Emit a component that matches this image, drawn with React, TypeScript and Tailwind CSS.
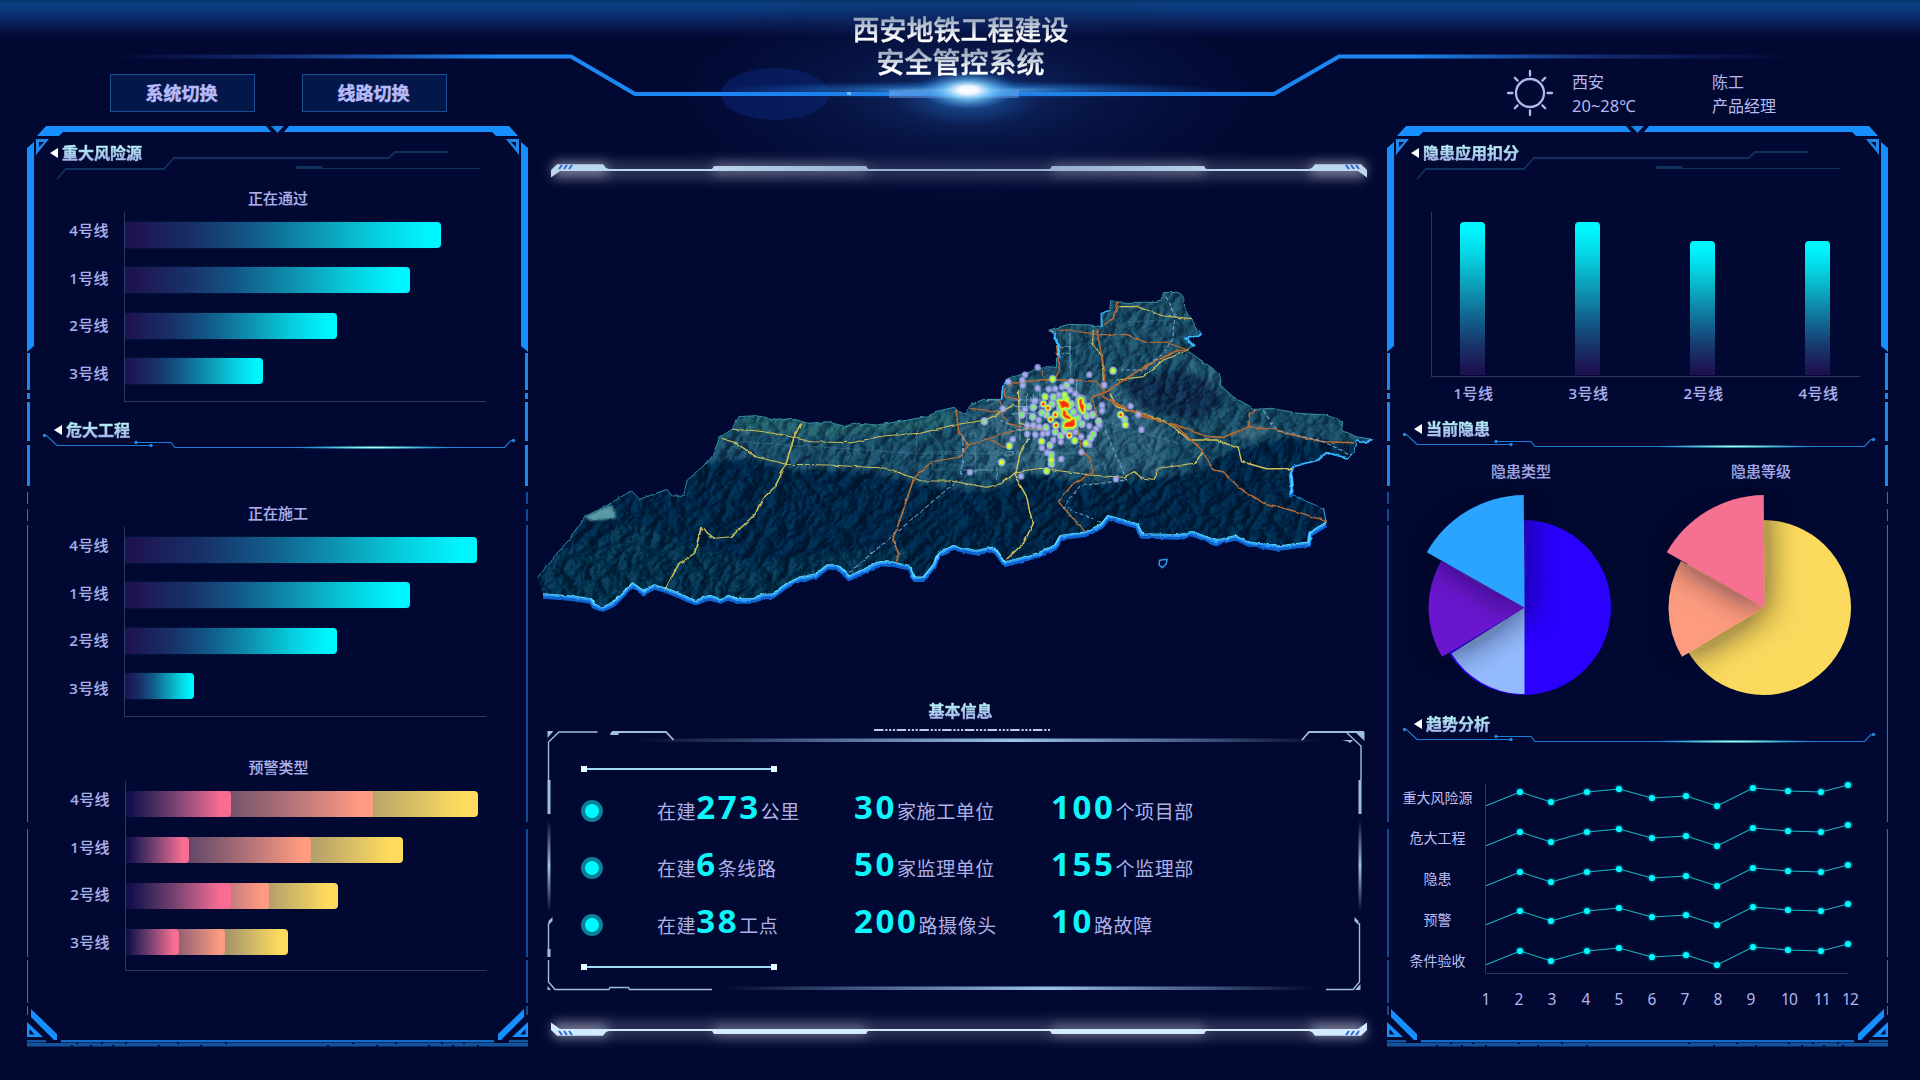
import React from "react";

const FONT = "font-['Noto_Sans','Noto_Sans_CJK_SC',sans-serif]";

/* ---------- decorative frames ---------- */

function FrameHalf() {
  return (
    <g>
      <polygon points="46,126 266,126 271,132 63,132 59,136 37,136" fill="#188fff" />
      <path d="M36 139H49L36 155ZM39 142V147L44 142Z" fill="#1f86e8" fillRule="evenodd" />
      <polygon points="34,142 34,346 27,352 27,148" fill="#188fff" />
      <polygon points="31,1009 57,1034 57,1041 55,1041 31,1017" fill="#188fff" />
      <path d="M27 1022L43 1037H27ZM29.500 1029V1034.500H34.500Z" fill="#188fff" fillRule="evenodd" />
    </g>
  );
}

function PanelFrame() {
  const specks = [71, 76, 90, 101, 112, 125, 158, 177, 200, 225, 327, 352, 376, 395, 428, 441, 452, 463, 477];
  return (
    <>
      <FrameHalf />
      <g transform="translate(555 0) scale(-1 1)">
        <FrameHalf />
      </g>
      <polygon points="271,126 284,126 277.500,133" fill="#1d84ea" />
      {/* left rail */}
      <path d="M28.500 353V390M28.500 393V399M28.500 402V441M28.500 445V486" stroke="#1d87ef" strokeWidth="3" fill="none" />
      <path d="M27.500 492V504M27.500 509V521M27.500 525V822M27.500 829V957M27.500 960V1003M27.500 1006V1015" stroke="#1a74d4" strokeWidth="1.200" fill="none" />
      {/* right rail */}
      <path d="M526.500 353V390M526.500 393V399M526.500 402V441M526.500 445V486" stroke="#1d87ef" strokeWidth="3" fill="none" />
      <path d="M527 492V504M527 509V521M527 525V822M527 829V957M527 960V1003M527 1006V1015" stroke="#0f4c93" strokeWidth="2" fill="none" />
      {/* base */}
      <path d="M61 1041H494" stroke="#188ffb" strokeWidth="1.500" />
      <path d="M27 1041H46M509 1041H528" stroke="#14569f" strokeWidth="2" />
      <rect x="27" y="1042.500" width="501" height="4" fill="#13539b" />
      {specks.map((x, i) => (
        <rect key={x} x={x} y={i % 2 ? 1042.500 : 1045} width="2" height="1.500" fill="#010831" />
      ))}
      <path d="M46 1041.500H61M494 1041.500H509" stroke="#010831" strokeWidth="3" />
    </>
  );
}

function Panel({ mirrored, children }: { mirrored?: boolean; children: React.ReactNode }) {
  return (
    <section className="relative flex h-[921px] w-[501px] shrink-0 flex-col">
      <svg
        viewBox="27 126 501 921"
        className={mirrored ? "absolute inset-0 h-[921px] w-[501px] -scale-x-100" : "absolute inset-0 h-[921px] w-[501px]"}
      >
        <PanelFrame />
      </svg>
      {children}
    </section>
  );
}

function Heading({ text }: { text: string }) {
  return (
    <h2 className="relative flex h-6 items-center gap-[3px] text-[16px] leading-6 font-bold">
      <svg width="9" height="10" viewBox="0 0 9 10">
        <polygon points="0,5 8,0 8,10" fill="#fff" />
      </svg>
      <span className="bg-linear-to-b from-[#b6f0f4] from-20% to-[#a3b3ee] to-85% bg-clip-text pr-1 text-transparent [-webkit-text-stroke:0.45px_transparent]">
        {text}
      </span>
    </h2>
  );
}

function PrimaryHeading({ text, className }: { text: string; className: string }) {
  return (
    <div className="relative h-[60px] pt-[15px]">
      <svg viewBox="27 126 501 60" className="absolute inset-0 h-[60px] w-[501px]">
        <g fill="none" stroke="#10305f">
          <path d="M57 179L66 169H164L174 158H388.500L395 152H448" strokeWidth="1.800" />
          <path d="M296 168.500H480" strokeWidth="1.100" />
          <path d="M296 167.500H322" strokeWidth="3" />
        </g>
      </svg>
      <div className={className}>
        <Heading text={text} />
      </div>
    </div>
  );
}

function CircuitHeading({ text, id }: { text: string; id: string }) {
  return (
    <div className="relative h-8">
      <svg viewBox="27 418 501 32" className="absolute inset-0 h-8 w-[501px]">
        <defs>
          <radialGradient id={id}>
            <stop offset="0" stopColor="#b8fff0" />
            <stop offset="0.350" stopColor="#5fe0d8" stopOpacity="0.900" />
            <stop offset="1" stopColor="#1f7fe0" stopOpacity="0" />
          </radialGradient>
        </defs>
        <path
          d="M44.500 435.500H46.500L57 445.500H151M136 442.500H171L175 447.500H504.500L511 440.500H513.500"
          fill="none"
          stroke="#217bd6"
          strokeWidth="1.200"
        />
        <g fill="#2d86de">
          <circle cx="44.500" cy="435.500" r="1.700" />
          <circle cx="151" cy="445.500" r="1.700" />
          <circle cx="136" cy="442.500" r="1.700" />
          <circle cx="513.500" cy="440.500" r="1.700" />
        </g>
        <ellipse cx="374" cy="447.500" rx="92" ry="2" fill={`url(#${id})`} />
      </svg>
      <div className="pl-[27px]">
        <Heading text={text} />
      </div>
    </div>
  );
}

/* ---------- bar charts ---------- */

const LINES = ["4号线", "1号线", "2号线", "3号线"];

function HBarChart({ title, children }: { title: string; children: React.ReactNode }) {
  return (
    <div className="relative h-[216px]">
      <h3 className="pl-px text-center text-[15px] leading-6 font-medium text-[#abb0ea] [-webkit-text-stroke:0.15px_#abb0ea]">{title}</h3>
      <div className="mt-[2px] flex h-[190px]">
        <ul className="flex w-[97px] flex-col gap-[27.500px] pt-[8px] pr-[15px] text-right text-[15px] leading-5 font-medium tracking-[0.400px] text-[#abb0ea] [-webkit-text-stroke:0.15px_#abb0ea]">
          {LINES.map((l) => (
            <li key={l}>{l}</li>
          ))}
        </ul>
        <div className="w-[362px] border-b border-l border-[#33355f] pt-[10px]">{children}</div>
      </div>
    </div>
  );
}

function CyanBars({ widths }: { widths: number[] }) {
  return (
    <div className="flex h-[162px] flex-col justify-between">
      {widths.map((w, i) => (
        <div
          key={i}
          style={{ width: w }}
          className="h-[26px] rounded-r-[4px] bg-[linear-gradient(90deg,#1e1351_2%,#183168_22%,#125a89_40%,#0d94b1_60%,#06cbdc_78%,#00f6ff_96%)] shadow-[0_0_3px_rgba(0,200,230,0.15)]"
        />
      ))}
    </div>
  );
}

const WARNINGS = [
  [105, 247, 352],
  [63, 185, 277],
  [105, 143, 212],
  [53, 99, 162],
];

function WarningBars() {
  return (
    <div className="flex h-[164px] flex-col justify-between">
      {WARNINGS.map(([a, b, c], i) => (
        <div key={i} className="grid h-[26px] items-stretch">
          <div style={{ width: c }} className="col-start-1 row-start-1 rounded-r-[4px] bg-linear-to-r from-[#1b1450] to-[#fedb5c] to-95%" />
          <div style={{ width: b }} className="col-start-1 row-start-1 rounded-r-[4px] bg-linear-to-r from-[#1b1450] to-[#ff9b80] to-95%" />
          <div style={{ width: a }} className="col-start-1 row-start-1 rounded-r-[4px] bg-linear-to-r from-[#150f4c] from-5% to-[#f76e92] to-90%" />
        </div>
      ))}
    </div>
  );
}

/* ---------- pies ---------- */

interface PieProps {
  title: string;
  id: string;
  base: string;
  lower?: string;
  side: string;
  top: string;
}

function Pie({ title, id, base, lower, side, top }: PieProps) {
  return (
    <figure className="w-[240px]">
      <figcaption className="text-center text-[15px] leading-5 font-medium text-[#a3a8e2] [-webkit-text-stroke:0.15px_#a3a8e2]">{title}</figcaption>
      <svg viewBox="1401 481 240 220" className="block h-[220px] w-[240px]">
        <defs>
          <filter id={`${id}-s`} x="-60%" y="-60%" width="220%" height="220%">
            <feDropShadow dx="3" dy="4" stdDeviation="16" floodColor="#0a0820" floodOpacity="0.600" />
          </filter>
        </defs>
        <circle cx="1523.500" cy="607.500" r="87.500" fill={base} />
        {lower && <path d="M1524.500 607.500V694H1520A86 86 0 0 1 1451.400 653.500Z" fill={lower} />}
        <path d="M1524.500 607.500L1442 656.700A95 95 0 0 1 1441 561Z" fill={side} filter={`url(#${id}-s)`} />
        <path d="M1524.500 607.500L1426.800 552.300A113 113 0 0 1 1523.700 495Z" fill={top} filter={`url(#${id}-s)`} />
      </svg>
    </figure>
  );
}

/* ---------- trend ---------- */

const TREND = [
  [1486, 805.7], [1520, 792], [1551, 802], [1587, 792], [1619, 789], [1652, 798],
  [1686, 796], [1717, 806], [1753, 788], [1788, 791], [1821, 792], [1848, 785],
];
const MONTH_X = [1486, 1519, 1552, 1586, 1619, 1652, 1685, 1718, 1751, 1789, 1822, 1850];
const TREND_ROWS = [0, 40, 80, 119, 159];
const TREND_LABELS = ["重大风险源", "危大工程", "隐患", "预警", "条件验收"];

function TrendChart() {
  return (
    <div className="mt-[32px] flex">
      <ul className="ml-[14px] flex w-[73px] flex-col gap-[20.800px] pt-[11.500px] text-center text-[14px] leading-5 whitespace-nowrap text-[#bcbff5]">
        {TREND_LABELS.map((l) => (
          <li key={l}>{l}</li>
        ))}
      </ul>
      <svg viewBox="1480 776 385 240" className="ml-[6px] h-[240px] w-[385px]">
        <path d="M1485.500 784V973.500H1848" fill="none" stroke="#33355f" />
        {TREND_ROWS.map((dy) => (
          <g key={dy} transform={`translate(0 ${dy})`}>
            <polyline points={TREND.map((p) => p.join(",")).join(" ")} fill="none" stroke="#1eb5bd" strokeWidth="1.100" />
            {TREND.slice(1).map(([x, y]) => (
              <g key={x}>
                <circle cx={x} cy={y} r="4.800" fill="#00b8c8" opacity="0.250" />
                <circle cx={x} cy={y} r="3.100" fill="#00f8ff" />
              </g>
            ))}
          </g>
        ))}
        <g fill="#b4b7ee" fontSize="15.500" textAnchor="middle">
          {MONTH_X.map((x, i) => (
            <text key={x} x={x} y="1004.500" letterSpacing={i > 8 ? -0.8 : 0}>
              {i + 1}
            </text>
          ))}
        </g>
      </svg>
    </div>
  );
}

/* ---------- header ---------- */

function HeaderBackdrop() {
  return (
    <svg viewBox="0 0 1920 240" className="absolute top-0 left-0 h-[240px] w-[1920px]">
      <defs>
        <linearGradient id="sky" x1="0" y1="0" x2="0" y2="1">
          <stop offset="0" stopColor="#083468" />
          <stop offset="0.080" stopColor="#0a3f80" />
          <stop offset="0.280" stopColor="#0a387a" />
          <stop offset="0.550" stopColor="#0a225e" />
          <stop offset="0.850" stopColor="#060f40" />
          <stop offset="1" stopColor="#010831" stopOpacity="0" />
        </linearGradient>
        <linearGradient id="rail" gradientUnits="userSpaceOnUse" x1="110" y1="0" x2="1800" y2="0">
          <stop offset="0" stopColor="#1c2f8a" stopOpacity="0" />
          <stop offset="0.090" stopColor="#1d3a8c" stopOpacity="0.700" />
          <stop offset="0.230" stopColor="#1c86f2" />
          <stop offset="0.770" stopColor="#1c86f2" />
          <stop offset="0.880" stopColor="#1d3a8c" stopOpacity="0.700" />
          <stop offset="1" stopColor="#1c2f8a" stopOpacity="0" />
        </linearGradient>
        <radialGradient id="haze">
          <stop offset="0" stopColor="#1b3f84" stopOpacity="0.700" />
          <stop offset="0.400" stopColor="#122a66" stopOpacity="0.380" />
          <stop offset="1" stopColor="#0a1a4c" stopOpacity="0" />
        </radialGradient>
        <radialGradient id="streak">
          <stop offset="0" stopColor="#7fd0ff" stopOpacity="0.950" />
          <stop offset="0.400" stopColor="#2a86e0" stopOpacity="0.550" />
          <stop offset="1" stopColor="#1560c0" stopOpacity="0" />
        </radialGradient>
        <radialGradient id="core">
          <stop offset="0" stopColor="#ffffff" />
          <stop offset="0.200" stopColor="#f4f8ff" />
          <stop offset="0.500" stopColor="#7ccfff" stopOpacity="0.650" />
          <stop offset="1" stopColor="#2a80e0" stopOpacity="0" />
        </radialGradient>
      </defs>
      <rect width="1920" height="38" fill="url(#sky)" />
      <ellipse cx="968" cy="95" rx="330" ry="120" fill="url(#haze)" />
      <ellipse cx="775" cy="94" rx="54" ry="26" fill="#0d2a86" opacity="0.420" />
      <path d="M110 56.500H571L635 94H1274L1339 56.500H1800" fill="none" stroke="url(#rail)" strokeWidth="4" />
      <ellipse cx="968" cy="90" rx="260" ry="9" fill="url(#streak)" />
      <rect x="889" y="90" width="130" height="8" fill="#8fb8f4" opacity="0.400" />
      <ellipse cx="968" cy="98" rx="75" ry="30" fill="url(#streak)" opacity="0.500" />
      <ellipse cx="968" cy="90" rx="50" ry="19" fill="url(#core)" />
      <rect x="847" y="92" width="4" height="3" fill="#6fb8f8" />
    </svg>
  );
}

function SunIcon() {
  return (
    <svg viewBox="-24 -24 48 48" width="48" height="48" fill="none" stroke="#b4b7ee" strokeWidth="2.300" strokeLinecap="round">
      <circle r="14" />
      {[0, 45, 90, 135, 180, 225, 270, 315].map((a) => (
        <path key={a} d={a % 90 ? "M0 -17.500V-21.500" : "M0 -17.500V-22"} transform={`rotate(${a})`} />
      ))}
    </svg>
  );
}

function Header() {
  const title =
    "bg-linear-to-b from-[#98a6ba] from-15% to-white to-75% bg-clip-text px-1 text-transparent [-webkit-text-stroke:0.5px_transparent]";
  return (
    <header className="relative h-[126px]">
      <HeaderBackdrop />
      <div className="relative grid h-[126px] grid-cols-3">
        <nav className="flex gap-[43px] pt-[74px] pl-[110px]">
          {["系统切换", "线路切换"].map((t) => (
            <button
              key={t}
              className="mr-1 h-[38px] w-[145px] border border-[#17508f] bg-[#03174a] pr-[2px] text-[18px] leading-none font-bold text-[#b8bafa] [-webkit-text-stroke:0.5px_#b8bafa]"
            >
              {t}
            </button>
          ))}
        </nav>
        <h1 className="flex flex-col items-center pt-[14px] pl-px font-medium">
          <span className={`${title} text-[27px] leading-8`}>西安地铁工程建设</span>
          <span className={`${title} text-[28px] leading-8`}>安全管控系统</span>
        </h1>
        <div className="flex pt-[69px] pl-[226px] text-[16px] leading-6 text-[#b6b9f0]">
          <SunIcon />
          <div className="ml-[18px] w-[140px] pt-px leading-[24px]">
            <p>西安</p>
            <p className="text-[16.500px]">20~28℃</p>
          </div>
          <div className="pt-px leading-[24px]">
            <p>陈工</p>
            <p>产品经理</p>
          </div>
        </div>
      </div>
    </header>
  );
}

/* ---------- centre ---------- */

function RailHalf({ fill }: { fill: string }) {
  return (
    <g>
      <path d="M551 177.500V170L557 164.300H603L606 168L609 169H712L714 166H866L868 169H960V171H560Z" fill={fill} />
      <path d="M559 169L562 165M564 169L567 165M569 169L572 165" stroke="#2b62d8" strokeWidth="2" />
    </g>
  );
}

function GlowRail({ flipped, fill, id }: { flipped?: boolean; fill: string; id: string }) {
  return (
    <svg viewBox="528 138 859 64" className={flipped ? "-mt-0.5 block h-16 w-[859px] -scale-y-100" : "block h-16 w-[859px]"}>
      <defs>
        <filter id={id} x="-10%" y="-300%" width="120%" height="700%">
          <feGaussianBlur stdDeviation="6" />
        </filter>
      </defs>
      <g filter={`url(#${id})`} fill="#c4c6d8">
        <rect x="553" y="161" width="812" height="19" opacity="0.220" />
        <rect x="553" y="163" width="54" height="13" opacity="0.550" />
        <rect x="714" y="163" width="152" height="12" opacity="0.380" />
        <rect x="1052" y="163" width="152" height="12" opacity="0.380" />
        <rect x="1311" y="163" width="54" height="13" opacity="0.550" />
      </g>
      <RailHalf fill={fill} />
      <g transform="translate(1918 0) scale(-1 1)">
        <RailHalf fill={fill} />
      </g>
    </svg>
  );
}

const OUTLINE_NORTH =
  "M32 922L58 872L62 860L88 812L118 740L160 705L203 662L218 688L268 658L275 675L298 676L305 630L335 590L350 560L365 500L387 478L397 440L430 437L475 450L495 445L525 460L560 455L590 468L620 460L650 465L690 455L740 440L770 420L792 412L800 425L815 432L820 405L845 388L878 388L880 350L890 325L925 308L960 290L978 292L978 265L985 262L975 190L965 180L1000 163L1040 165L1062 170L1060 130L1075 120L1077 95L1110 97L1150 97L1170 90L1173 68L1200 67L1210 85L1212 110L1225 150L1242 190L1238 198L1215 205L1228 228L1215 240L1250 280L1275 310L1280 350L1300 380L1340 418L1370 415L1420 430L1470 435L1500 455L1498 480L1525 500L1553 508";
const OUTLINE_EAST =
  "L1545 520L1525 510L1520 545L1510 565L1470 548L1455 570L1410 590L1405 610L1408 650L1405 675L1465 715L1470 760";
const OUTLINE_SOUTH =
  "L1440 790L1438 820L1380 832L1330 820L1305 800L1270 815L1225 788L1200 798L1135 795L1125 765L1072 740L1060 765L1030 790L985 800L975 830L945 852L885 880L865 835L830 845L790 830L762 850L755 885L735 925L720 925L710 890L680 880L655 878L600 922L580 888L560 888L540 915L510 925L485 945L460 975L440 978L425 990L395 990L380 980L365 990L345 980L320 995L270 960L245 948L225 965L205 942L170 1000L150 1015L135 1005L130 990L95 982L42 975";

/* x, y, strength: 0 faint halo, 1 green core, 2 yellow core, 3 red core */
const HEAT = [
  [323, 262, 0], [285, 284, 0], [277, 300, 0], [278, 316, 0], [235, 305, 0], [323, 325, 0], [368, 297, 2], [410, 316, 1], [424, 304, 0],
  [478, 284, 0], [549, 272, 2], [523, 315, 0], [376, 326, 0], [396, 322, 0], [356, 328, 0], [345, 350, 2], [404, 345, 2], [436, 341, 0],
  [448, 352, 0], [316, 362, 0], [340, 372, 3], [354, 384, 3], [366, 372, 1], [310, 382, 1], [284, 388, 0], [276, 404, 1], [308, 411, 1],
  [336, 398, 1], [362, 418, 3], [385, 400, 1], [378, 436, 3], [424, 372, 1], [430, 396, 1], [476, 380, 1], [376, 404, 3],
  [488, 404, 1], [516, 376, 0], [516, 392, 0], [470, 408, 1], [456, 432, 1], [478, 438, 0], [506, 424, 1], [508, 434, 0], [498, 446, 0],
  [292, 436, 0], [310, 436, 0], [292, 462, 0], [316, 464, 0], [338, 462, 0], [348, 442, 1], [328, 440, 0], [335, 484, 2], [360, 496, 1],
  [370, 480, 0], [392, 468, 1], [392, 486, 0], [418, 466, 3], [434, 482, 2], [454, 470, 0], [468, 490, 2], [490, 462, 1], [482, 474, 1],
  [336, 504, 0], [352, 518, 0], [364, 524, 1], [364, 540, 2], [364, 552, 1], [394, 537, 0], [350, 573, 2], [238, 498, 2], [248, 478, 0],
  [215, 547, 2], [120, 577, 0], [273, 589, 0], [454, 517, 0], [558, 597, 0], [572, 404, 3], [584, 418, 1], [586, 434, 2], [602, 379, 0],
  [625, 404, 0], [634, 449, 0], [219, 386, 0], [163, 424, 1], [478, 494, 0], [410, 358, 2], [386, 344, 0], [370, 352, 1], [420, 330, 0],
  [444, 414, 1], [326, 420, 0], [350, 404, 1], [390, 384, 1], [352, 460, 0], [376, 456, 1], [404, 452, 1], [436, 456, 0],
];

const HOT_SPOTS =
  "M388 364L396 366L400 362L408 366L416 372V382L404 380L396 384ZM400 392L406 394L408 406L416 408L422 416L408 414L399 406ZM406 430L418 426L432 418L434 434L428 440H404ZM449 360L454 358L455 370L461 378L459 396L453 386L450 376Z";

function HeatMap() {
  const green = HEAT.filter((h) => h[2] > 0);
  const yellow = HEAT.filter((h) => h[2] > 1);
  const red = HEAT.filter((h) => h[2] > 2);
  return (
    <g strokeLinejoin="round">
      <g fill="#9ea2e4" opacity="0.700">
        {HEAT.map(([x, y, s], i) => (
          <ellipse key={i} cx={x} cy={y} rx={s > 0 ? 12 : 10} ry={s > 0 ? 13 : 10.500} />
        ))}
        <path d={HOT_SPOTS} stroke="#9ea2e4" strokeWidth="30" />
      </g>
      <g fill="#b8b4fb" opacity="0.800">
        {HEAT.map(([x, y, s], i) => (
          <ellipse key={i} cx={x} cy={y} rx={s > 0 ? 9.500 : 6} ry={s > 0 ? 10.500 : 6.500} />
        ))}
      </g>
      <g fill="#7df06e">
        <path d={HOT_SPOTS} stroke="#7df06e" strokeWidth="18" />
        {green.map(([x, y, s], i) => (
          <ellipse key={i} cx={x} cy={y} rx={s > 1 ? 8.500 : 6} ry={s > 1 ? 9.500 : 7} />
        ))}
      </g>
      <g fill="#eef52a">
        <path d={HOT_SPOTS} stroke="#f2f022" strokeWidth="9" />
        {yellow.map(([x, y, s], i) => (
          <ellipse key={i} cx={x} cy={y} rx={s > 2 ? 7 : 5} ry={s > 2 ? 8 : 6} />
        ))}
      </g>
      <g fill="#fb3010">
        <path d={HOT_SPOTS} stroke="#fb5a10" strokeWidth="2.500" />
        {red.map(([x, y], i) => (
          <ellipse key={i} cx={x} cy={y} rx="4" ry="4.500" />
        ))}
      </g>
    </g>
  );
}

function CityMap() {
  const whole = OUTLINE_NORTH + OUTLINE_EAST + OUTLINE_SOUTH + "Z";
  const south = "M1405 610L1408 650L1405 675" + "M1470 760" + OUTLINE_SOUTH;
  return (
    <svg viewBox="528 202 859 497" className="block h-[497px] w-[859px]">
      <defs>
        <clipPath id="land">
          <path d={whole} transform="translate(520 270) scale(.5485 .33333)" />
        </clipPath>
        <linearGradient id="ground" x1="0" y1="0" x2="0" y2="1">
          <stop offset="0" stopColor="#1b4f69" />
          <stop offset="0.550" stopColor="#174c68" />
          <stop offset="1" stopColor="#0b3058" />
        </linearGradient>
        <filter id="rough" x="-5%" y="-5%" width="110%" height="110%">
          <feTurbulence type="fractalNoise" baseFrequency="0.120" numOctaves="3" seed="4" result="n" />
          <feDisplacementMap in="SourceGraphic" in2="n" scale="3" xChannelSelector="R" yChannelSelector="G" />
        </filter>
        <filter id="ridge" x="0" y="0" width="100%" height="100%" colorInterpolationFilters="sRGB">
          <feTurbulence type="turbulence" baseFrequency="0.045 0.065" numOctaves="4" seed="23" result="n" />
          <feDiffuseLighting in="n" surfaceScale="6" lightingColor="#ffffff" diffuseConstant="0.750">
            <feDistantLight azimuth="230" elevation="40" />
          </feDiffuseLighting>
        </filter>
        <filter id="soft" x="-20%" y="-20%" width="140%" height="140%">
          <feGaussianBlur stdDeviation="7" />
        </filter>
        <filter id="mist" x="-20%" y="-20%" width="140%" height="140%">
          <feGaussianBlur stdDeviation="3" />
        </filter>
      </defs>
      <g filter="url(#rough)">
        <g clipPath="url(#land)" className="isolate">
          <rect x="530" y="285" width="850" height="330" fill="url(#ground)" />
          <g transform="translate(520 270) scale(.5485 .33333)">
            <path fill="#256a6e" opacity="0.600" filter="url(#soft)" d="M400 440L800 430L780 470L560 500L400 490Z" />
            <path
              filter="url(#soft)"
              fill="#06254a"
              d="M20 1040V700L330 580L420 565L490 600L640 605L720 640L840 670L930 615L1050 645L1130 630L1220 615L1300 540L1400 500L1560 530V1040Z"
            />
            <path filter="url(#soft)" fill="#0e4058" opacity="0.450" d="M20 1040L60 860L200 760L420 880L700 830L760 1040Z" />
            <path filter="url(#soft)" fill="#0a2c4e" opacity="0.850" d="M1100 330L1200 300L1270 330L1290 400L1230 450L1130 420Z" />
            <path filter="url(#soft)" fill="#3f7690" opacity="0.450" d="M900 330L1080 330L1180 480L1180 600L820 610L800 480Z" />
            <path filter="url(#soft)" fill="#2f6a86" opacity="0.500" d="M1200 250L1270 300L1300 400L1220 300Z" />
          </g>
          <rect
            x="330"
            y="0"
            width="1300"
            height="1000"
            filter="url(#ridge)"
            transform="rotate(-40 955 450)"
            className="opacity-60 mix-blend-soft-light"
          />
          <g transform="translate(520 270) scale(.5485 .33333)">
            <path filter="url(#mist)" fill="#7fd0d0" opacity="0.700" d="M118 740L165 705L172 725L175 745L130 752Z" />
            <path filter="url(#mist)" fill="#5f8a98" opacity="0.450" d="M1290 490L1340 460L1370 480L1330 510Z" />
            <g fill="none" stroke="#6fb4cc" strokeWidth="1.500" opacity="0.400">
              <path d="M425 450L400 540M400 515L720 550M530 520L495 585M550 520L545 585M575 520L572 585M600 520L598 590M650 470L635 600M725 480L718 600M740 480L770 530L770 570M750 545H805V600H752ZM830 490V620M870 480V620M730 550H1050M780 585H900M985 190V420M1100 160L1130 210M1110 155L1180 150M1020 200L1010 320M1060 450L1200 520" />
            </g>
          </g>
        </g>
        <g transform="translate(520 270) scale(.5485 .33333)" fill="none" strokeLinejoin="round">
          <path d={OUTLINE_NORTH} stroke="#3fa9bd" strokeWidth="1.800" />
          <path d={"M1553 508" + OUTLINE_EAST} stroke="#2fa5e0" strokeWidth="2" />
          <path d={south} stroke="#0f63d0" strokeWidth="8" transform="translate(0 7)" />
          <path d={south} stroke="#2e9bff" strokeWidth="6" />
          <path d={south} stroke="#5fe6ff" strokeWidth="2.500" transform="translate(0 -4)" />
          <path
            d="M965 180L975 190L985 262M1242 190L1238 198L1215 205L1228 228M1553 508L1545 520L1525 510M1510 565L1470 548L1455 570L1410 590L1405 610"
            stroke="#35b4ff"
            strokeWidth="5"
          />
          <path d="M878 388L880 350L890 325M1060 170V130L1075 120" stroke="#35b4ff" strokeWidth="3" />
          {/* western roads */}
          <g stroke="#c9bd5c" strokeWidth="3.200">
            <path d="M387 478L430 482L480 495L530 515L605 518L660 498L730 490L790 465L850 450L900 405" />
            <path d="M368 505L395 520L430 560L485 583L560 585L670 595L730 632L790 634L850 652L880 640L905 605L950 595L1040 615L1100 622L1120 605L1135 625L1155 628L1165 595L1230 580L1245 545" />
            <path d="M512 460L500 500L485 583L465 650L440 690L430 730L405 770L385 800L355 805L330 775L318 850L290 880L265 958" />
          </g>
          <g stroke="#b86f3c" strokeWidth="3.200">
            <path d="M795 420L800 490L818 525L800 562L750 575L718 625L705 690L680 810L690 850L686 882" />
            <path d="M818 525L905 480L960 475" />
          </g>
          <path d="M795 635L695 775L595 915" stroke="#7fb0e0" strokeWidth="2.400" strokeDasharray="12 5" opacity="0.850" />
          <path d="M808 500L805 620" stroke="#7fb0e0" strokeWidth="2.400" strokeDasharray="12 5" opacity="0.850" />
        </g>
        <g transform="translate(930 280) scale(.33333)" fill="none" strokeLinejoin="round">
          <g stroke="#d0c05c" strokeWidth="4.500">
            <path d="M296 475L270 520L256 590L290 650L300 700L310 730L280 790L230 838" />
            <path d="M565 80L620 80L700 108L784 116" strokeWidth="3.500" />
            <path d="M490 150L488 190L516 230L520 300" strokeWidth="3.500" />
            <path d="M540 340L560 380L700 420L780 480L860 480L925 505L935 545L1010 566L1085 566" />
            <path d="M775 212L700 240L640 290L560 300" strokeWidth="3.500" />
            <path d="M265 330L268 430L340 445" strokeWidth="3.500" />
          </g>
          <g stroke="#b56a34" strokeWidth="4.500">
            <path d="M565 66L550 115L520 135" />
            <path d="M356 152L420 150L500 164L590 164L650 188L710 186L776 212" strokeWidth="3.500" />
            <path d="M500 150L510 200L525 280L520 350L560 375L740 440L815 510L850 570L880 575L930 625L1000 668L1110 698L1190 725" />
            <path d="M484 352L530 335L630 268L740 212L776 212" strokeWidth="5.500" />
            <path d="M980 390L958 400L956 440L880 472L830 470L740 435L640 410L540 360" strokeWidth="5" />
            <path d="M956 440L1030 448L1100 468L1180 485L1270 488" />
            <path d="M380 200L388 270L375 297L330 300L250 310L222 330L225 350L265 358" strokeWidth="4" />
            <path d="M332 270L345 300L440 300L500 305L520 330" strokeWidth="4" />
            <path d="M120 385L210 395L235 430L290 445L340 450M208 360L225 400M180 480L225 500" strokeWidth="4" />
            <path d="M440 440L455 510L485 540L485 580L430 610L385 665L465 755" />
            <path d="M484 352L500 400L505 430" strokeWidth="4" />
          </g>
          <g stroke="#8fb4d8" strokeWidth="3.500" strokeDasharray="12 7" opacity="0.800">
            <path d="M708 50L735 100L728 180L700 220L640 270L550 270" />
            <path d="M525 450L560 530L590 600L450 618L400 680L520 730" />
            <path d="M1000 392L1040 450L1180 485L1265 525" />
          </g>
          <g stroke="#9ad8f0" strokeWidth="3" opacity="0.550">
            <path d="M385 200h35v20h-35zM240 360h120M250 380h100M245 400h110M270 320v160M290 340v150M310 340v140M240 450h120M200 560v40M100 570h90M420 160v120M440 300v60M210 420l60 30M225 515h25v10h-25zM300 350l20 40M330 330v60M170 360h35" />
          </g>
        </g>
      </g>
      <g transform="translate(930 280) scale(.33333)">
        <HeatMap />
        <path d="M689 841L711 838L709 851L697 863L687 855Z" fill="none" stroke="#2f9bf0" strokeWidth="4.500" strokeLinejoin="round" />
      </g>
    </svg>
  );
}

function InfoFrame() {
  return (
    <svg viewBox="528 723 859 277" className="absolute inset-0 h-[277px] w-[859px]">
      <defs>
        <linearGradient id="beam">
          <stop offset="0" stopColor="#8fb4dc" stopOpacity="0" />
          <stop offset="0.300" stopColor="#8fb4dc" stopOpacity="0.600" />
          <stop offset="0.550" stopColor="#9cc4e6" />
          <stop offset="0.800" stopColor="#8fb4dc" stopOpacity="0.500" />
          <stop offset="1" stopColor="#8fb4dc" stopOpacity="0" />
        </linearGradient>
        <linearGradient id="post" x1="0" y1="0" x2="0" y2="1">
          <stop offset="0" stopColor="#a0c0e4" stopOpacity="0" />
          <stop offset="0.500" stopColor="#a0c0e4" />
          <stop offset="1" stopColor="#a0c0e4" stopOpacity="0" />
        </linearGradient>
      </defs>
      <path d="M874 730H1050" stroke="#b8cdea" strokeWidth="1.800" strokeDasharray="9.500 1.800 2.200 1.600 2.200 1.600 2.200 1.600" />
      <rect x="635" y="738.500" width="690" height="3.500" fill="url(#beam)" />
      <rect x="722" y="986.500" width="592" height="3.500" fill="url(#beam)" />
      <rect x="547.500" y="820" width="3" height="92" fill="url(#post)" />
      <rect x="1358.500" y="820" width="3" height="92" fill="url(#post)" />
      <g fill="none" stroke="#9fbde0" strokeWidth="1.400">
        <path d="M548.500 780V742L559 732H597.500" />
        <path d="M612 732H666L673.500 740" strokeWidth="1.800" />
        <path d="M548.500 923V957M548.500 960V982L555 989.500H609L610 987.500H628.500L629.500 989.500H712" />
        <path d="M1302 740L1309 732H1364" strokeWidth="1.800" />
        <path d="M1347 733L1361 746V780" />
        <path d="M1359.500 923V982L1353 989.500H1326" />
      </g>
      <g fill="#9fbde0">
        <path d="M547.500 731H553.500L547.500 738ZM611 732H620L618 735H610ZM1355 732H1364.500V741ZM1342 740H1353L1350 743L1348 741.500Z" />
        <rect x="547.500" y="780" width="3" height="34" />
        <rect x="1358.500" y="780" width="3" height="34" />
        <rect x="547.500" y="949" width="3" height="8" />
        <path d="M552.500 917V921L548.500 925V921ZM1354.500 917V921L1358.500 925V921ZM547.500 986V990H551ZM1360.500 984V990H1355Z" />
      </g>
    </svg>
  );
}

function CapLine() {
  return (
    <div className="flex h-1.5 w-[196px] items-center">
      <i className="h-1.5 w-1.5 bg-[#e6fbff]" />
      <i className="h-0.5 flex-1 bg-[#a0dcf2]" />
      <i className="h-1.5 w-1.5 bg-[#e6fbff]" />
    </div>
  );
}

const INFO: [string, string, string][][] = [
  [["在建", "273", "公里"], ["", "30", "家施工单位"], ["", "100", "个项目部"]],
  [["在建", "6", "条线路"], ["", "50", "家监理单位"], ["", "155", "个监理部"]],
  [["在建", "38", "工点"], ["", "200", "路摄像头"], ["", "10", "路故障"]],
];

function BasicInfo() {
  return (
    <div className="relative h-[277px] pt-[43px] pl-[53px]">
      <InfoFrame />
      <div className="relative">
        <CapLine />
        <div className="mt-[10px] mb-[11px] flex flex-col">
          {INFO.map((row, i) => (
            <div key={i} className="flex h-[57px] items-center">
              <i className="mr-[54px] h-[22px] w-[22px] rounded-full border-4 border-[#0c7f99] bg-[#00f8ff]" />
              {row.map(([pre, num, post], j) => (
                <p
                  key={j}
                  className="flex h-[57px] w-[197px] items-baseline text-[19px] leading-[49px] tracking-[0.600px] whitespace-nowrap text-[#aeb0e6]"
                >
                  {pre}
                  <b className="text-[33px] leading-[49px] font-bold tracking-[2.600px] text-[#0ff4fb]">{num}</b>
                  {post}
                </p>
              ))}
            </div>
          ))}
        </div>
        <CapLine />
      </div>
    </div>
  );
}

/* ---------- page ---------- */

const SCORES = [
  { name: "1号线", h: 153 },
  { name: "3号线", h: 153 },
  { name: "2号线", h: 134 },
  { name: "4号线", h: 134 },
];

export default function App() {
  return (
    <div className={`${FONT} flex h-[1080px] w-[1920px] flex-col overflow-hidden bg-[#010831]`}>
      <Header />
      <main className="flex pl-[27px]">
        <Panel>
          <PrimaryHeading text="重大风险源" className="pl-[23px]" />
          <HBarChart title="正在通过">
            <CyanBars widths={[316, 285, 212, 138]} />
          </HBarChart>
          <div className="mt-4 mb-[51px]">
            <CircuitHeading text="危大工程" id="glow-a" />
          </div>
          <HBarChart title="正在施工">
            <CyanBars widths={[352, 285, 212, 69]} />
          </HBarChart>
          <div className="mt-[38px] ml-px">
            <HBarChart title="预警类型">
              <WarningBars />
            </HBarChart>
          </div>
        </Panel>

        <div className="flex w-[859px] shrink-0 flex-col pt-3">
          <GlowRail fill="#bcd8ee" id="rail-top" />
          <CityMap />
          <h2 className="relative h-6 text-center text-[16px] leading-6 font-bold">
            <span className="bg-linear-to-b from-[#b6f0f4] from-20% to-[#a3b3ee] to-85% bg-clip-text pr-1 pl-2.5 text-transparent [-webkit-text-stroke:0.45px_transparent]">
              基本信息
            </span>
          </h2>
          <BasicInfo />
          <GlowRail flipped fill="#d2ebff" id="rail-bottom" />
        </div>

        <Panel mirrored>
          <PrimaryHeading text="隐患应用扣分" className="pl-6" />
          <div className="mt-[26px] ml-[44px] flex h-[165px] w-[429px] items-end gap-[90px] border-b border-l border-[#33355f] pb-px pl-[28px]">
            {SCORES.map((s) => (
              <div
                key={s.name}
                style={{ height: s.h }}
                className="w-[25px] rounded-t-[4px] bg-[linear-gradient(0deg,#1e1351_3%,#18356a_20%,#125f8c_36%,#0d97b3_56%,#06cede_76%,#00f6ff_95%)]"
              />
            ))}
          </div>
          <div className="mt-1.5 ml-[29px] flex text-[15px] leading-5 font-medium tracking-[0.400px] text-[#abb0ea] [-webkit-text-stroke:0.15px_#abb0ea]">
            {SCORES.map((s) => (
              <span key={s.name} className="w-[115px] text-center">
                {s.name}
              </span>
            ))}
          </div>
          <div className="mt-3.5 mb-3">
            <CircuitHeading text="当前隐患" id="glow-b" />
          </div>
          <div className="ml-3.5 flex">
            <Pie title="隐患类型" id="kind" base="#2a00ff" lower="#94bbff" side="#6b14cf" top="#2ba4ff" />
            <Pie title="隐患等级" id="level" base="#fcda5e" side="#fd9b80" top="#f66f91" />
          </div>
          <div className="mt-[11px]">
            <CircuitHeading text="趋势分析" id="glow-c" />
          </div>
          <TrendChart />
        </Panel>
      </main>
    </div>
  );
}
